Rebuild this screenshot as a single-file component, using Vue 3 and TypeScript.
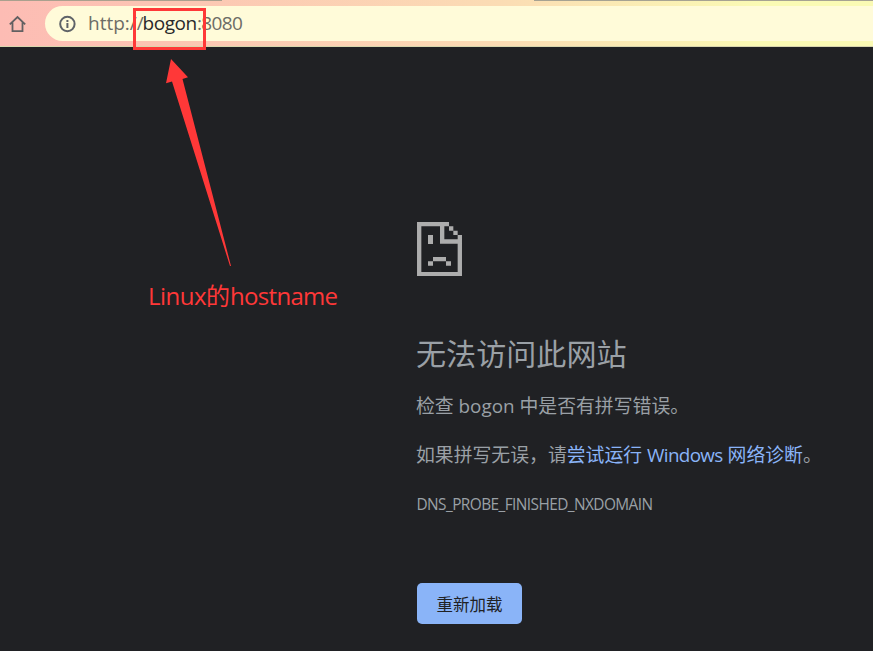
<script setup lang="ts">
const page = {
  title: '无法访问此网站',
  code: 'DNS_PROBE_FINISHED_NXDOMAIN',
  reload: '重新加载',
}
</script>

<template>
  <div class="window">
    <header class="toolbar">
      <div class="tab-edge"><i class="edge-left"></i><i class="edge-right"></i></div>
      <div class="toolbar-row">
        <svg class="home" viewBox="0 0 18 18" width="18" height="18">
          <path d="M0.8 9.4 8.5 2l7.7 7.4M3.5 7.6v8.6h10V7.6" />
        </svg>
        <div class="omnibox">
          <svg class="info" viewBox="0 0 18 18" width="18" height="18">
            <circle cx="9.4" cy="9" r="7.2" />
            <path d="M9.4 8v5M9.4 5v1.9" />
          </svg>
          <div class="url"><span class="scheme">http://</span><span class="host">bogon</span><span class="port">:8080</span></div>
        </div>
      </div>
    </header>

    <main class="error">
      <svg class="sad" viewBox="51 35 135 163" width="45" height="54.3">
        <path d="M51 35H147V48H64V185H173V100H120V48H133V87H173V74H186V198H51Z" />
        <path d="M147 48h13v13h-13zM160 61h13v13h-13zM84 74h15v27H84zM99 140h39v13H99zM84 153h15v13H84zM138 153h15v13h-15z" />
      </svg>
      <h1>{{ page.title }}</h1>
      <p class="hint">检查 <span class="latin">bogon</span> 中是否有拼写错误。</p>
      <p class="hint second">如果拼写无误，请<a>尝试运行 <span class="win">Windows</span> 网络诊断</a>。</p>
      <div class="code">{{ page.code }}</div>
      <button type="button">{{ page.reload }}</button>
    </main>

    <div class="mark"></div>
    <svg class="arrow" viewBox="0 0 72 210" width="72" height="210">
      <path d="M11 0 28 18.3 22.5 20 71 207 70 207 12 22.5 6 24.2Z" />
    </svg>
    <div class="note"><span class="note-a">Linux</span>的<span class="note-b">hostname</span></div>
  </div>
</template>

<style>
body {
  background: #202124;
}
</style>

<style scoped>
.window {
  position: relative;
  width: 873px;
  height: 651px;
  overflow: hidden;
  background: #202124;
  font-family: 'Open Sans', 'Noto Sans CJK SC', sans-serif;
  color: #9aa0a6;
}
.toolbar {
  height: 47px;
  box-sizing: border-box;
  border-bottom: 1px solid #d8d6ad;
  background: linear-gradient(90deg, #fdbcb4 0, #fcc4b3 150px, #fbdcb4 500px, #fafab4 760px);
}
.tab-edge {
  display: flex;
  justify-content: space-between;
  height: 1px;
}
.edge-left {
  width: 222px;
  background: #aaa08e;
}
.edge-right {
  width: 339px;
  background: #a6a292;
}
.toolbar-row {
  display: flex;
  align-items: center;
  padding: 5px 0 0 9px;
}
.home {
  flex: none;
  fill: none;
  stroke: #626062;
  stroke-width: 1.8;
}
.omnibox {
  display: flex;
  align-items: center;
  flex: 1;
  height: 35px;
  margin-left: 18px;
  padding-left: 13px;
  border-radius: 18px 0 0 18px;
  background: #fffbd9;
}
.info {
  fill: none;
  stroke: #5f6368;
  stroke-width: 2;
}
.url {
  display: flex;
  margin-left: 12px;
  font-size: 19px;
  line-height: 33px;
  white-space: nowrap;
  color: #6d6c66;
}
.scheme {
  width: 54.5px;
}
.host {
  width: 54.5px;
  letter-spacing: -0.45px;
  color: #29292b;
}
.port {
  letter-spacing: -0.65px;
}
.error {
  display: flex;
  flex-direction: column;
  align-items: flex-start;
  padding: 174.7px 0 0 417px;
}
.sad {
  display: block;
  fill: #adadad;
}
h1 {
  margin: 55px 0 0 -1px;
  font-size: 30.1px;
  font-weight: 400;
  line-height: 45px;
}
.hint {
  margin: 16px 0 0 -1px;
  font-size: 18.85px;
  line-height: 28px;
  white-space: nowrap;
}
.second {
  margin-top: 21px;
}
a {
  color: #8ab4f8;
}
.win {
  letter-spacing: -0.65px;
}
.code {
  margin: 26px 0 0 -0.5px;
  font-size: 15.4px;
  line-height: 20px;
  letter-spacing: -0.57px;
}
button {
  width: 105px;
  height: 41px;
  margin-top: 68px;
  padding: 2px 0 0;
  border: 0;
  border-radius: 5px;
  background: #8ab4f8;
  color: #202124;
  font-family: inherit;
  font-size: 16.5px;
}
.mark {
  position: absolute;
  left: 133px;
  top: 8px;
  width: 73px;
  height: 42px;
  box-sizing: border-box;
  border: 3px solid #ff3838;
}
.arrow {
  position: absolute;
  left: 160px;
  top: 59px;
  fill: #ff3838;
}
.note {
  position: absolute;
  left: 148px;
  top: 279px;
  font-size: 24px;
  line-height: 34px;
  white-space: nowrap;
  color: #ff3838;
}
.note-a {
  letter-spacing: -0.5px;
}
.note-b {
  letter-spacing: -0.7px;
}
</style>
